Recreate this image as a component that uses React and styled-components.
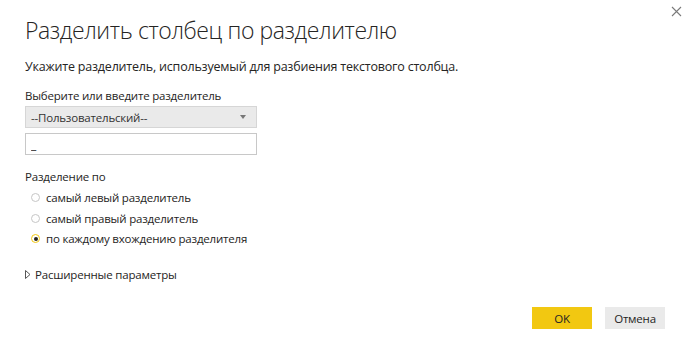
import React, { useState } from "react";
import styled, { createGlobalStyle } from "styled-components";

const Global = createGlobalStyle`
  body {
    margin: 0;
    background: #ffffff;
    font-family: "Open Sans", "Noto Sans", sans-serif;
    color: #252423;
  }
`;

const Dialog = styled.div`
  position: relative;
  width: 690px;
  height: 342px;
  box-sizing: border-box;
  padding: 13px 25px 0 25px;
  display: flex;
  flex-direction: column;
  background: #fff;
  overflow: hidden;
`;

const Close = styled.button`
  position: absolute;
  top: 3px;
  right: 6px;
  width: 16px;
  height: 16px;
  padding: 0;
  border: none;
  background: transparent;
  display: flex;
  align-items: center;
  justify-content: center;
`;

const Title = styled.h1`
  margin: 0;
  font-size: 23px;
  letter-spacing: -0.4px;
  font-weight: 300;
  line-height: 34px;
  color: #252423;
`;

const Subtitle = styled.p`
  margin: 11px 0 0 0;
  font-size: 12.5px;
  letter-spacing: -0.2px;
  line-height: 18px;
`;

const Label = styled.div`
  margin-top: ${(p) => p.$top || 0}px;
  font-size: 11.5px;
  letter-spacing: -0.2px;
  line-height: 16px;
`;

const Select = styled.div`
  width: 232px;
  height: 22px;
  box-sizing: border-box;
  margin-top: 2px;
  background: #eaeaea;
  border: 1px solid #d6d6d6;
  display: flex;
  align-items: center;
  justify-content: space-between;
  padding: 0 10px 0 5px;
  font-size: 11.5px;
  letter-spacing: -0.2px;
  color: #333;
`;

const Caret = styled.span`
  width: 0;
  height: 0;
  border-left: 3px solid transparent;
  border-right: 3px solid transparent;
  border-top: 4px solid #777;
`;

const Input = styled.input`
  width: 232px;
  height: 22px;
  box-sizing: border-box;
  margin-top: 5px;
  border: 1px solid #c8c8c8;
  padding: 0 5px;
  font-family: inherit;
  font-size: 12px;
  color: #252423;
  outline: none;
`;

const RadioList = styled.div`
  display: flex;
  flex-direction: column;
  gap: 1.5px;
  margin-top: 3px;
  padding-left: 6px;
`;

const RadioRow = styled.label`
  display: flex;
  align-items: center;
  gap: 6px;
  height: 19px;
  font-size: 11.5px;
  letter-spacing: -0.2px;
  color: #252423;
`;

const Dot = styled.span`
  width: 9px;
  height: 9px;
  border-radius: 50%;
  box-sizing: border-box;
  border: ${(p) => (p.$on ? "1.5px solid #f2c811" : "1px solid #c6c6c6")};
  display: flex;
  align-items: center;
  justify-content: center;
  &::after {
    content: "";
    width: 4px;
    height: 4px;
    border-radius: 50%;
    background: ${(p) => (p.$on ? "#252423" : "transparent")};
  }
`;

const Advanced = styled.div`
  margin-top: 19px;
  display: flex;
  align-items: center;
  gap: 4px;
  font-size: 11.5px;
  letter-spacing: -0.2px;
  color: #252423;
`;

const Footer = styled.div`
  margin-top: auto;
  margin-bottom: 13px;
  display: flex;
  justify-content: flex-end;
  gap: 13px;
`;

const Button = styled.button`
  width: 60px;
  height: 22px;
  border: none;
  padding: 0;
  font-family: inherit;
  font-size: 11.5px;
  letter-spacing: -0.2px;
  color: #252423;
  background: ${(p) => (p.$primary ? "#f2c811" : "#eaeaea")};
`;

const options = [
  "самый левый разделитель",
  "самый правый разделитель",
  "по каждому вхождению разделителя",
];

export default function App() {
  const [sel, setSel] = useState(2);
  return (
    <>
      <Global />
      <Dialog>
        <Close aria-label="close">
          <svg width="11" height="11" viewBox="0 0 11 11">
            <path d="M1 1 L10 10 M10 1 L1 10" stroke="#7a7a7a" strokeWidth="1.1" />
          </svg>
        </Close>
        <Title>Разделить столбец по разделителю</Title>
        <Subtitle>Укажите разделитель, используемый для разбиения текстового столбца.</Subtitle>
        <Label $top={12}>Выберите или введите разделитель</Label>
        <Select>
          <span>--Пользовательский--</span>
          <Caret />
        </Select>
        <Input defaultValue="_" />
        <Label $top={14}>Разделение по</Label>
        <RadioList>
          {options.map((o, i) => (
            <RadioRow key={o} onClick={() => setSel(i)}>
              <Dot $on={sel === i} />
              {o}
            </RadioRow>
          ))}
        </RadioList>
        <Advanced>
          <svg width="6" height="9" viewBox="0 0 6 9">
            <path d="M0.5 0.5 L5 4.5 L0.5 8.5 Z" fill="none" stroke="#555" strokeWidth="1" />
          </svg>
          Расширенные параметры
        </Advanced>
        <Footer>
          <Button $primary>OK</Button>
          <Button>Отмена</Button>
        </Footer>
      </Dialog>
    </>
  );
}
